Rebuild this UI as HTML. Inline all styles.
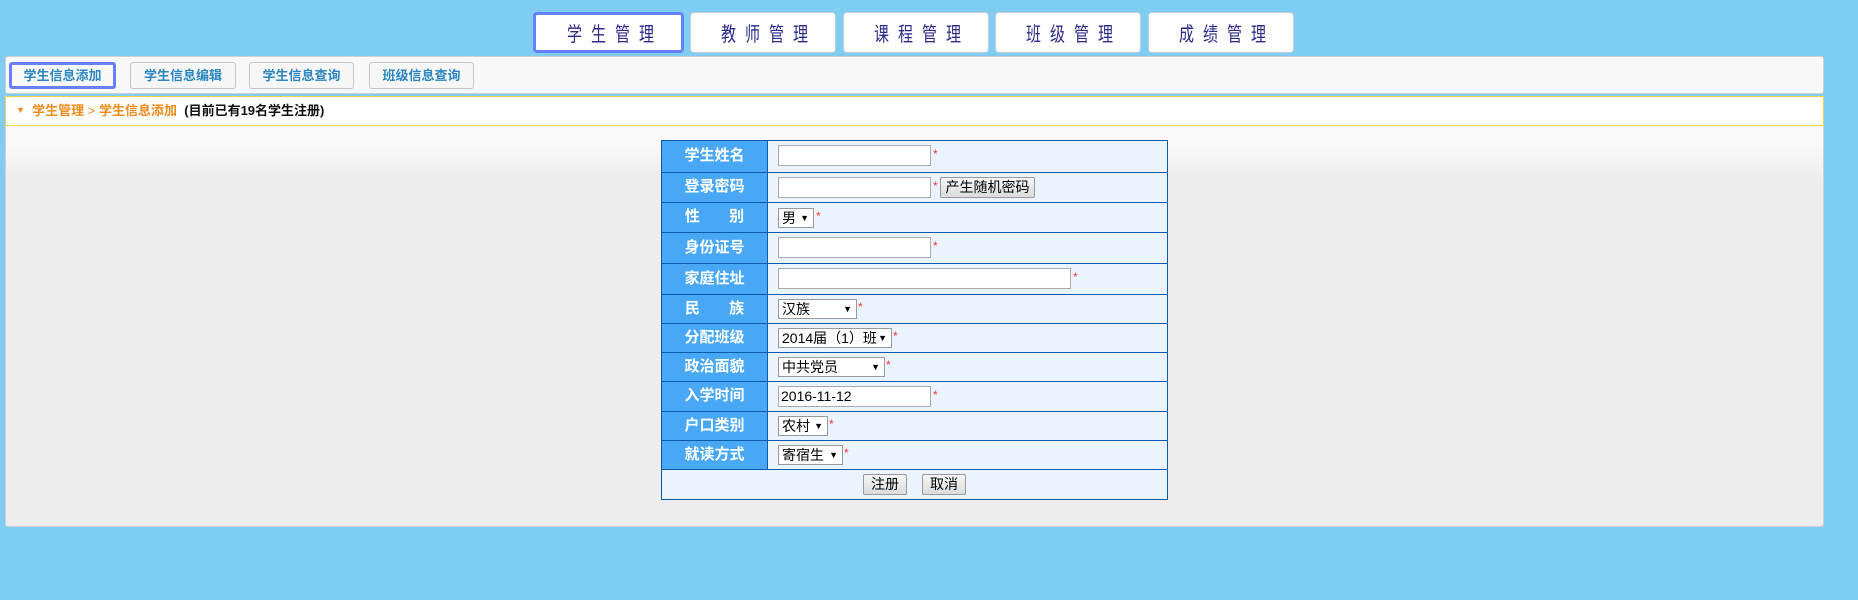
<!DOCTYPE html>
<html><head><meta charset="utf-8"><style>
*{margin:0;padding:0;box-sizing:border-box}
body{width:1858px;height:600px;background:#7fcdf3;font-family:"Liberation Sans","Noto Sans CJK SC",sans-serif;position:relative;overflow:hidden}
.a{position:absolute}
.tab{position:absolute;top:12px;height:41px;width:146px;background:#fff;border:1px solid #ccc;border-radius:4px;text-align:center;line-height:39px;color:#2a2a8a;font-size:20px;font-family:"WenQuanYi Zen Hei","Noto Sans CJK SC",sans-serif}
.tab span{display:inline-block;transform:scaleX(0.75);letter-spacing:12px;margin-right:-12px}
.tab.on{border:3px solid #6680ff;line-height:35px}
.sb{position:absolute;top:62px;height:27px;border:1px solid #c4c4c4;border-radius:3px;background:#f6f6f6;color:#2a86c0;font-size:13px;font-weight:bold;text-align:center;line-height:25px}
.sb.on{border:3px solid #6680ff;line-height:21px;background:#f8f8f8}
.row{position:absolute;left:661px;width:507px;border:1px solid #0a5ca8;border-bottom:none;background:#eaf4ff}
.lab{position:absolute;left:0;top:0;bottom:0;width:106px;background:#49a8f6;border-right:1px solid #0a5ca8;color:#fff;font-weight:bold;font-size:15px;text-align:center}
.inp{position:absolute;left:116px;height:21px;background:#fff;border:1px solid #aaa}
.sel{position:absolute;left:116px;height:20px;background:#fff;border:1px solid #999;font-size:14px;line-height:18px;padding-left:3px;color:#000}
.sel:after{content:"▼";position:absolute;right:4px;top:0;font-size:9px}
.st{position:absolute;color:#f33;font-size:12px}
.btn{position:absolute;height:21px;border:1px solid #999;background:linear-gradient(#f6f6f6,#dcdcdc);font-size:14px;line-height:19px;text-align:center;color:#000;border-radius:2px}
</style></head><body>
<div class="tab on" style="left:533px;width:151px"><span>学生管理</span></div>
<div class="tab" style="left:690px"><span>教师管理</span></div>
<div class="tab" style="left:843px"><span>课程管理</span></div>
<div class="tab" style="left:995px"><span>班级管理</span></div>
<div class="tab" style="left:1148px"><span>成绩管理</span></div>

<div class="a" style="left:5px;top:56px;width:1819px;height:38px;background:#f8f8f8;border:1px solid #d0d0d0;border-radius:3px"></div>
<div class="sb on" style="left:9px;width:107px">学生信息添加</div>
<div class="sb" style="left:130px;width:106px">学生信息编辑</div>
<div class="sb" style="left:249px;width:105px">学生信息查询</div>
<div class="sb" style="left:369px;width:105px">班级信息查询</div>

<div class="a" style="left:5px;top:96px;width:1819px;height:431px;background:linear-gradient(#f9f9f9 0px,#f9f9f9 50px,#ededed 82px,#ededed);border:1px solid #d0d0d0;border-radius:3px"></div>
<div class="a" style="left:5px;top:96px;width:1819px;height:30px;background:#fff;border:1px solid #f5d23a;font-size:13px;font-weight:bold;line-height:27px;padding-left:10px">
<span style="color:#f08a1a;font-size:9px;position:relative;top:-2px">▼</span>&nbsp;&nbsp;<span style="color:#f08a1a">学生管理 <span style="font-weight:normal">&gt;</span> 学生信息添加</span>&nbsp;&nbsp;<span style="color:#111">(目前已有19名学生注册)</span></div>

<div class="row" style="top:140px;height:32px"><div class="lab" style="line-height:30px">学生姓名</div><div class="inp" style="top:4px;width:153px"></div><div class="st" style="left:271px;top:6px">*</div></div>
<div class="row" style="top:172px;height:30px"><div class="lab" style="line-height:28px">登录密码</div><div class="inp" style="top:4px;width:153px"></div><div class="st" style="left:271px;top:6px">*</div><div class="btn" style="left:278px;top:4px;width:95px">产生随机密码</div></div>
<div class="row" style="top:202px;height:30px"><div class="lab" style="line-height:28px;word-spacing:0">性&nbsp;&nbsp;&nbsp;&nbsp;&nbsp;&nbsp;&nbsp;别</div><div class="sel" style="top:5px;width:36px">男</div><div class="st" style="left:154px;top:6px">*</div></div>
<div class="row" style="top:232px;height:31px"><div class="lab" style="line-height:29px">身份证号</div><div class="inp" style="top:4px;width:153px"></div><div class="st" style="left:271px;top:6px">*</div></div>
<div class="row" style="top:263px;height:31px"><div class="lab" style="line-height:29px">家庭住址</div><div class="inp" style="top:4px;width:293px"></div><div class="st" style="left:411px;top:6px">*</div></div>
<div class="row" style="top:294px;height:29px"><div class="lab" style="line-height:27px">民&nbsp;&nbsp;&nbsp;&nbsp;&nbsp;&nbsp;&nbsp;族</div><div class="sel" style="top:4px;width:79px">汉族</div><div class="st" style="left:196px;top:5px">*</div></div>
<div class="row" style="top:323px;height:29px"><div class="lab" style="line-height:27px">分配班级</div><div class="sel" style="top:4px;width:114px">2014届（1）班</div><div class="st" style="left:231px;top:5px">*</div></div>
<div class="row" style="top:352px;height:29px"><div class="lab" style="line-height:27px">政治面貌</div><div class="sel" style="top:4px;width:107px">中共党员</div><div class="st" style="left:224px;top:5px">*</div></div>
<div class="row" style="top:381px;height:30px"><div class="lab" style="line-height:28px">入学时间</div><div class="inp" style="top:4px;width:153px;font-size:14px;line-height:19px;padding-left:2px">2016-11-12</div><div class="st" style="left:271px;top:6px">*</div></div>
<div class="row" style="top:411px;height:29px"><div class="lab" style="line-height:27px">户口类别</div><div class="sel" style="top:4px;width:50px">农村</div><div class="st" style="left:167px;top:5px">*</div></div>
<div class="row" style="top:440px;height:29px"><div class="lab" style="line-height:27px">就读方式</div><div class="sel" style="top:4px;width:65px">寄宿生</div><div class="st" style="left:182px;top:5px">*</div></div>
<div class="row" style="top:469px;height:31px;border-bottom:1px solid #0a5ca8"><div class="btn" style="left:201px;top:4px;width:44px">注册</div><div class="btn" style="left:260px;top:4px;width:44px">取消</div></div>
</body></html>
